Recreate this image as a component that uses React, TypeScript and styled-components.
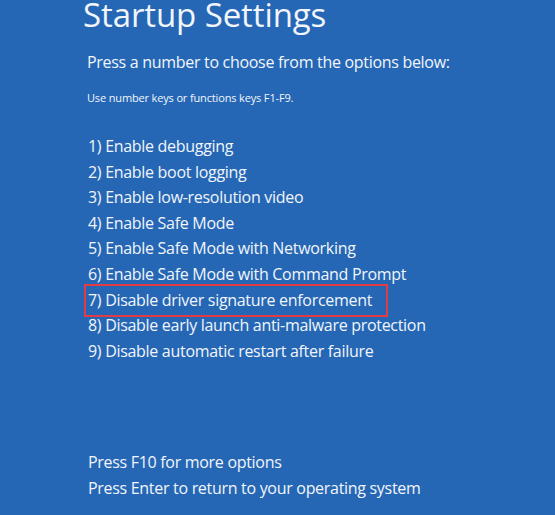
import * as React from 'react';
import styled, { createGlobalStyle } from 'styled-components';

const GlobalStyle = createGlobalStyle`
  html, body {
    margin: 0;
    padding: 0;
    background: #2567b5;
  }
  body {
    font-family: "Open Sans", "Noto Sans", "Liberation Sans", sans-serif;
    color: #f2f5fa;
  }
`

const Screen = styled.div`
  width: 555px;
  height: 515px;
  box-sizing: border-box;
  padding: 0 0 0 85px;
  background: #2567b5;
  display: flex;
  flex-direction: column;
  overflow: hidden;
`

const Title = styled.h1`
  margin: 0 0 0 -2px;
  font-size: 33px;
  font-weight: 400;
  line-height: 30px;
  letter-spacing: -0.1px;
`

const Subtitle = styled.div`
  margin: 20px 0 0 2px;
  font-size: 16px;
  line-height: 24px;
  letter-spacing: -0.3px;
`

const Hint = styled.div`
  margin: 16px 0 0 2px;
  font-size: 11px;
  line-height: 16px;
  letter-spacing: -0.15px;
`

const OptionList = styled.ol`
  list-style: none;
  margin: 28px 0 0 3px;
  padding: 0;
  display: flex;
  flex-direction: column;
  align-items: flex-start;
`

const Option = styled.li<{ $marked?: boolean }>`
  font-size: 16px;
  line-height: 25.6px;
  letter-spacing: -0.3px;
  white-space: nowrap;
  outline: ${(p) => (p.$marked ? '2px solid #e23b44' : 'none')};
  outline-offset: ${(p) => (p.$marked ? '2px' : '0')};
  padding-right: ${(p) => (p.$marked ? '12px' : '0')};
`

const Footer = styled.div`
  margin: auto 0 14px 3px;
  display: flex;
  flex-direction: column;
`

const FooterLine = styled.div`
  font-size: 16px;
  line-height: 26px;
  letter-spacing: -0.3px;
`

const options = [
  'Enable debugging',
  'Enable boot logging',
  'Enable low-resolution video',
  'Enable Safe Mode',
  'Enable Safe Mode with Networking',
  'Enable Safe Mode with Command Prompt',
  'Disable driver signature enforcement',
  'Disable early launch anti-malware protection',
  'Disable automatic restart after failure',
]

const App: React.FC = () => {
  return (
    <>
      <GlobalStyle />
      <Screen>
        <Title>Startup Settings</Title>
        <Subtitle>Press a number to choose from the options below:</Subtitle>
        <Hint>Use number keys or functions keys F1-F9.</Hint>
        <OptionList>
          {options.map((text, i) => (
            <Option key={text} $marked={i === 6}>
              {i + 1}) {text}
            </Option>
          ))}
        </OptionList>
        <Footer>
          <FooterLine>Press F10 for more options</FooterLine>
          <FooterLine>Press Enter to return to your operating system</FooterLine>
        </Footer>
      </Screen>
    </>
  )
}

export default App
